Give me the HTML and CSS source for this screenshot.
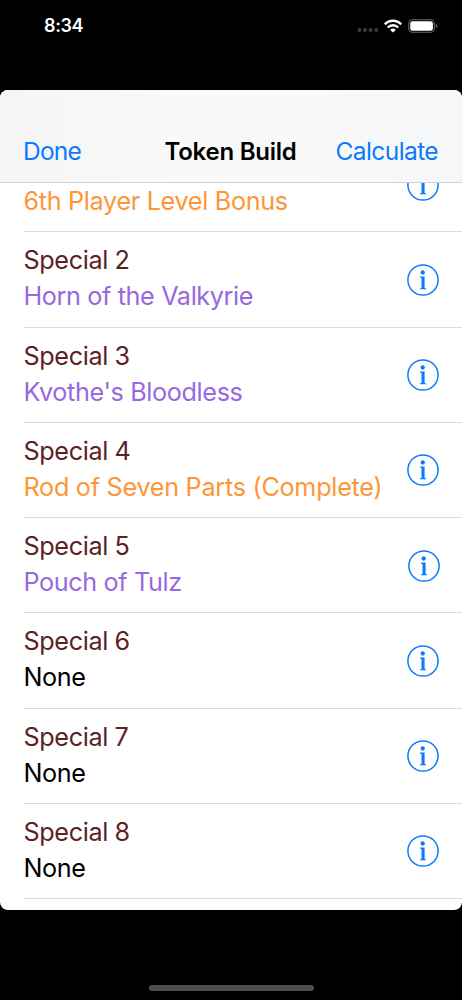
FILE: index.html
```html
<!DOCTYPE html>
<html lang="en">
<head>
  <meta charset="UTF-8" />
  <title>Token Build</title>
  <link rel="stylesheet" href="styles.css">
</head>
<body>

  <!-- Shared info icon -->
  <svg class="defs" width="0" height="0">
    <symbol id="info" viewBox="0 0 32 32">
      <circle cx="16" cy="16" r="15.1" fill="none" stroke="currentColor" stroke-width="1.5" />
      <circle cx="15.7" cy="8.5" r="2.15" fill="currentColor" />
      <path d="M13 12.6H17.6V24L19.1 24.4V25.2H12.9V24.4L14.5 24V14.1L13 13.6Z" fill="currentColor" />
    </symbol>
  </svg>

  <!-- Status bar -->
  <div class="status-bar">
    <span class="time">8:34</span>
    <div class="status-icons">
      <svg class="dots" width="22" height="6" viewBox="0 0 22 6">
        <circle cx="2.4" cy="3" r="2" /><circle cx="8" cy="3" r="2" />
        <circle cx="13.6" cy="3" r="2" /><circle cx="19.2" cy="3" r="2" />
      </svg>
      <svg class="wifi" width="18" height="14" viewBox="0 0 18 14">
        <path d="M0.8 5.3A11.4 11.4 0 0 1 17.2 5.3" />
        <path d="M3.8 8.5A7.2 7.2 0 0 1 14.2 8.5" />
        <path class="fan" d="M9 13.6L6.2 10.9A4 4 0 0 1 11.8 10.9Z" />
      </svg>
      <svg class="battery" width="30" height="14" viewBox="0 0 30 14">
        <rect x="0.7" y="0.7" width="25.6" height="12.6" rx="3.8" fill="none" stroke="#6a6a6a" stroke-width="1.1" />
        <rect x="2.2" y="2.2" width="22.7" height="9.6" rx="2.3" fill="#fff" />
        <path d="M27.8 4.7Q29.4 5.4 29.4 7T27.8 9.3Z" fill="#6a6a6a" />
      </svg>
    </div>
  </div>

  <!-- Sheet -->
  <div class="sheet">
    <div class="nav-bar">
      <a class="done">Done</a>
      <h1>Token Build</h1>
      <a class="calculate">Calculate</a>
    </div>

    <div class="scroller">
      <ul class="slots">
        <li class="slot first">
          <div class="text"><p class="orange">6th Player Level Bonus</p></div>
          <svg class="info"><use href="#info" /></svg>
        </li>
        <li class="slot">
          <div class="text"><p class="label">Special 2</p><p class="purple">Horn of the Valkyrie</p></div>
          <svg class="info"><use href="#info" /></svg>
        </li>
        <li class="slot">
          <div class="text"><p class="label">Special 3</p><p class="purple">Kvothe's Bloodless</p></div>
          <svg class="info"><use href="#info" /></svg>
        </li>
        <li class="slot">
          <div class="text"><p class="label">Special 4</p><p class="orange complete">Rod of Seven Parts (Complete)</p></div>
          <svg class="info"><use href="#info" /></svg>
        </li>
        <li class="slot wide">
          <div class="text"><p class="label">Special 5</p><p class="purple">Pouch of Tulz</p></div>
          <svg class="info"><use href="#info" /></svg>
        </li>
        <li class="slot">
          <div class="text"><p class="label">Special 6</p><p>None</p></div>
          <svg class="info"><use href="#info" /></svg>
        </li>
        <li class="slot">
          <div class="text"><p class="label">Special 7</p><p>None</p></div>
          <svg class="info"><use href="#info" /></svg>
        </li>
        <li class="slot">
          <div class="text"><p class="label">Special 8</p><p>None</p></div>
          <svg class="info"><use href="#info" /></svg>
        </li>
      </ul>
    </div>
  </div>

  <div class="home-indicator"></div>

</body>
</html>
```

FILE: styles.css
```css
* {
  box-sizing: border-box;
}

body {
  margin: 0;
  height: 1000px;
  display: flex;
  flex-direction: column;
  background: #000;
  color: #000;
  font-family: Inter, "Liberation Sans", sans-serif;
  font-size: 25.2px;
  letter-spacing: -0.37px;
  overflow: hidden;
}

.defs {
  display: block;
}

h1, p, ul {
  margin: 0;
  padding: 0;
}

/* Status bar */
.status-bar {
  height: 90px;
  flex: none;
  display: flex;
  justify-content: space-between;
  align-items: flex-start;
  padding: 14px 24px 0 44px;
  color: #fff;
}

.time {
  font-size: 18px;
  line-height: 24px;
  font-weight: 600;
}

.status-icons {
  display: flex;
  align-items: center;
  padding-top: 4px;
}

.dots {
  margin: 9px 5px 0 0;
  fill: #3c3c3c;
}

.wifi {
  margin-right: 6px;
  fill: none;
  stroke: #fff;
  stroke-width: 2.4;
}

.wifi .fan {
  fill: #fff;
  stroke: none;
}

/* Sheet */
.sheet {
  height: 819.5px;
  flex: none;
  display: flex;
  flex-direction: column;
  background: #fff;
  border-radius: 8px;
  overflow: hidden;
}

.nav-bar {
  height: 93px;
  flex: none;
  display: grid;
  grid-template-columns: 1fr auto 1fr;
  align-items: start;
  padding: 46px 24px 0 23px;
  line-height: 31px;
  background: linear-gradient(90deg, #f5f5f5, #f9f9f9 35%, #f9f9f9 70%, #f6f7f9);
  border-bottom: 1px solid #d2d2d2;
}

.nav-bar h1 {
  font-size: 24px;
  font-weight: 600;
  letter-spacing: -0.25px;
}

.nav-bar a {
  color: #0a7aff;
  font-size: 24.5px;
  letter-spacing: -0.8px;
}

.nav-bar .calculate {
  text-align: right;
  letter-spacing: -0.6px;
}

.scroller {
  flex: 1;
  overflow: hidden;
}

/* List is scrolled so the first slot sits partly above the fold */
.slots {
  list-style: none;
  margin-top: -46px;
}

.slot {
  height: 95.25px;
  display: flex;
  justify-content: space-between;
  align-items: center;
  margin-left: 24px;
  padding-right: 23px;
  border-bottom: 1px solid #dcdcdd;
}

.slot.wide {
  padding-right: 22px;
}

.text {
  margin-left: -0.5px;
  padding-bottom: 2px;
  line-height: 36px;
  white-space: nowrap;
}

.first .text {
  padding-top: 36px;
  letter-spacing: -0.32px;
}

.complete {
  letter-spacing: -0.27px;
}

.label {
  color: #5c2123;
}

.purple {
  color: #9768e0;
}

.orange {
  color: #fd9637;
}

.info {
  width: 32px;
  height: 32px;
  flex: none;
  margin-top: 1px;
  color: #0a7aff;
}

.home-indicator {
  width: 165px;
  height: 6px;
  margin: 75.5px auto 0;
  flex: none;
  border-radius: 3px;
  background: #4d4d4d;
}
```
